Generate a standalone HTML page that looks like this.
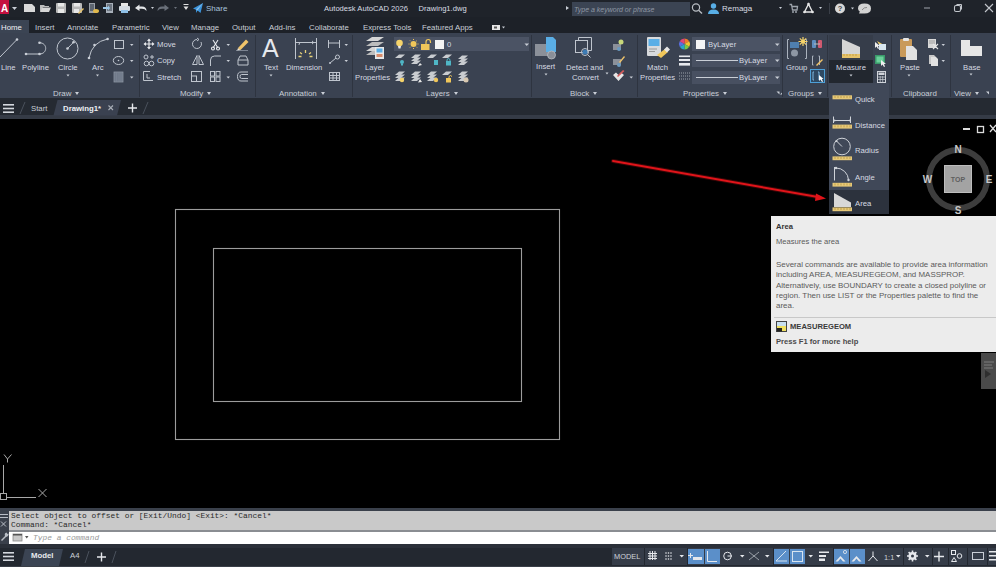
<!DOCTYPE html>
<html><head><meta charset="utf-8">
<style>
*{margin:0;padding:0;box-sizing:border-box}
html,body{width:996px;height:567px;overflow:hidden;background:#000}
body{position:relative;font-family:"Liberation Sans",sans-serif;color:#e6e9ee}
.a{position:absolute}
.t{position:absolute;white-space:nowrap;line-height:1}
#title{left:0;top:0;width:996px;height:17px;background:#1f232a}
#tabs{left:0;top:17px;width:996px;height:16px;background:#1d2128}
#ribbon{left:0;top:32.5px;width:996px;height:65.5px;background:#3a4251}
#ftabs{left:0;top:98px;width:996px;height:17px;background:#252a32}
#fline{left:0;top:115px;width:996px;height:4px;background:#353b46}
#cmd{left:0;top:508px;width:996px;height:40px;background:#3a404b}
#lay{left:0;top:548px;width:996px;height:19px;background:#232830}
.tab{font-size:7.8px;color:#c9ced6;top:23.7px}
.lbl{font-size:7.7px;color:#d7dbe2}
.plbl{font-size:7.9px;color:#c9ced6;top:89.5px}
.plbl i{display:inline-block;width:0;height:0;border-left:2.5px solid transparent;border-right:2.5px solid transparent;border-top:3px solid #c9ced6;margin-left:4px;vertical-align:1px}
.tip{font-size:7.6px;color:#5a5a5a;left:776px}
#ov{position:absolute;left:0;top:0}
</style></head><body>
<div id="title" class="a"></div>
<div id="tabs" class="a"></div>
<div id="ribbon" class="a"></div>
<div id="ftabs" class="a"></div>
<div id="fline" class="a"></div>
<div id="cmd" class="a"></div>
<div id="lay" class="a"></div>

<!-- ribbon tabs -->
<div class="a" style="left:0;top:20px;width:29px;height:13px;background:#3b4453"></div>
<!-- measure button bg -->
<div class="a" style="left:829px;top:35px;width:44px;height:25px;background:#363d4a"></div>
<div class="a" style="left:829px;top:60px;width:44px;height:23px;background:#22272f"></div>
<!-- layer dropdown & property dropdowns -->
<div class="a" style="left:394px;top:37px;width:135px;height:14px;background:#4b5364"></div>
<div class="a" style="left:692px;top:37px;width:88px;height:14px;background:#4b5364"></div>
<div class="a" style="left:692px;top:54px;width:88px;height:13px;background:#485061"></div>
<div class="a" style="left:692px;top:71px;width:88px;height:13px;background:#485061"></div>
<div class="a" style="left:394px;top:37px;width:135px;height:14px;background:#4b5364"></div>
<!-- title search -->
<div class="a" style="left:572px;top:2px;width:118px;height:14px;background:#3b4453"></div>

<!-- cmd line -->
<div class="a" style="left:9px;top:511px;width:987px;height:19px;background:#c9c9c9"></div>
<div class="a" style="left:9px;top:530px;width:987px;height:2px;background:#8a8d92"></div>
<div class="a" style="left:9px;top:532px;width:987px;height:12px;background:#ffffff"></div>
<div class="a" style="left:0;top:544px;width:996px;height:4px;background:#2b3039"></div>
<div class="a" style="left:0;top:566px;width:996px;height:1px;background:#3a3f48"></div>
<!-- status buttons bg -->
<div class="a" style="left:612px;top:548px;width:384px;height:17px;background:#353c48"></div>

<!-- dropdown menu -->
<div class="a" style="left:829px;top:83px;width:60px;height:131px;background:#404858"></div>
<div class="a" style="left:829px;top:190px;width:60px;height:24px;background:#2c323d"></div>

<!-- tooltip -->
<div class="a" style="left:771px;top:216px;width:225px;height:136px;background:#ececec"></div>
<div class="a" style="left:774px;top:317px;width:222px;height:1px;background:#c8c8c8"></div>
<!-- nav bar -->
<div class="a" style="left:981px;top:353px;width:15px;height:36px;background:#4a4a4a"></div>

<svg id="ov" width="996" height="567" viewBox="0 0 996 567">
<g fill="none" stroke="#9c9c9c" stroke-width="1.1">
<rect x="175.5" y="209.5" width="384" height="230"/>
<rect x="213.5" y="248.5" width="308" height="153"/>
</g>

<!-- ============ TITLE BAR ICONS ============ -->
<g>
<rect x="0" y="0" width="9" height="14" fill="#c5113f"/>
<path d="M12,7 H17 L14.5,10 Z" fill="#c9ced6"/>
<path d="M24,4 H32 L35,7 V12 H24 Z" fill="#d9d9d9"/>
<path d="M40,5 H44 L45,6 H49 V7 H43 L40,12 Z" fill="#bdbdbd"/><path d="M42,7.5 H51 L49,12 H40 Z" fill="#d6d6d6"/>
<rect x="56" y="3" width="10" height="10" rx="1" fill="#b9b9b9"/><rect x="58" y="3" width="6" height="3.5" fill="#e8e8e8"/><rect x="58" y="9" width="6" height="4" fill="#e8e8e8"/>
<rect x="72" y="3" width="10" height="10" rx="1" fill="#b9b9b9"/><rect x="74" y="3" width="6" height="3.5" fill="#e8e8e8"/><rect x="74" y="9" width="5" height="4" fill="#e8e8e8"/><path d="M78,13 L83,8 L84,9 L79,14 Z" fill="#e8c46a"/>
<rect x="89" y="3" width="6" height="10" fill="#9aa0a8"/><rect x="90" y="4" width="4" height="7" fill="#5d6570"/><ellipse cx="96" cy="11" rx="3" ry="2" fill="#e0b84c"/>
<rect x="106" y="3" width="7" height="10" fill="#a8b0ba"/><rect x="107" y="4" width="5" height="7" fill="#6d7580"/><path d="M103,7 H108 V5.5 L110,8 L108,10.5 V9 H103 Z" fill="#9cc8e8"/>
<rect x="121" y="3" width="7" height="3" fill="#e6e6e6"/><rect x="119" y="6" width="11" height="5" rx="1" fill="#d4dbe2"/><rect x="121" y="10" width="7" height="3" fill="#8fc0e6"/>
<path d="M135,8 L139.5,4.5 V6.5 H142 Q146.5,6.5 146.5,11 Q145,8.8 142,8.8 H139.5 V11 Z" fill="#e3e5e8"/>
<path d="M151,7 H154 L152.5,9 Z" fill="#c9ced6"/>
<path d="M169,8 L164.5,4.5 V6.5 H162 Q157.5,6.5 157.5,11 Q159,8.8 162,8.8 H164.5 V11 Z" fill="#6a707a"/>
<path d="M174,7 H177 L175.5,9 Z" fill="#6a707a"/>
<rect x="183.5" y="4" width="5" height="1" fill="#e0e0e0"/><path d="M183.5,6.5 H188.5 L186,10 Z" fill="#e0e0e0"/>
<path d="M193,8.5 L203,3 L200.5,13 L197.5,10.5 L196,13 L196,9.8 Z" fill="#3c93da"/><path d="M196,9.8 L203,3 L197.5,10.5 Z" fill="#8cc4ee"/>
<path d="M566,6 L569,8 L566,10 Z" fill="#c9ced6"/>
<circle cx="696" cy="7.5" r="3.6" fill="none" stroke="#b8bcc2" stroke-width="1.2"/><line x1="698.6" y1="10.2" x2="702" y2="13.5" stroke="#b8bcc2" stroke-width="1.4"/>
<circle cx="713.5" cy="6" r="2.7" fill="#58aee6"/><path d="M708,14 Q708,9.5 713.5,9.5 Q719,9.5 719,14 Z" fill="#58aee6"/>
<path d="M779,7 H782 L780.5,9 Z" fill="#c9ced6"/>
<path d="M789.5,4.5 H791.5 L792.5,10 H797 L797.5,6.5 H792" fill="none" stroke="#9da3ab" stroke-width="1.3"/><circle cx="793" cy="12" r="1" fill="#9da3ab"/><circle cx="796" cy="12" r="1" fill="#9da3ab"/>
<path d="M808.5,4 L804.5,12 H812.5 Z" fill="none" stroke="#e6e6e6" stroke-width="1.4"/><circle cx="808.5" cy="4" r="1.3" fill="#e6e6e6"/><circle cx="804.5" cy="12" r="1.3" fill="#e6e6e6"/><circle cx="812.5" cy="12" r="1.3" fill="#e6e6e6"/>
<path d="M819,7 H822 L820.5,9 Z" fill="#c9ced6"/>
<rect x="829" y="3" width="1" height="11" fill="#3a3f48"/>
<circle cx="840" cy="8.5" r="5" fill="#d8d8d8"/><text x="840" y="11.3" font-size="7.5" font-weight="bold" text-anchor="middle" fill="#444" font-family="Liberation Sans">?</text>
<path d="M851,7.5 H854 L852.5,9.5 Z" fill="#c9ced6"/>
<path d="M858,8.5 Q858,3.5 864.5,3.5 Q871,3.5 871,8.5 Q871,13.5 864.5,13.5 L859,13.5 L859.8,11.5 Q858,10.5 858,8.5 Z" fill="#d2d2d2"/><path d="M862,10 Q864,7 867,7.5" stroke="#888" fill="none" stroke-width="1"/>
<rect x="924" y="7.5" width="6" height="1" fill="#9fa4ab"/>
<rect x="954.5" y="5.5" width="6" height="6" rx="1.5" fill="none" stroke="#c2c6cc" stroke-width="1.1"/><path d="M956.5,4.5 H961.5 V9.5" fill="none" stroke="#c2c6cc" stroke-width="1"/>
<path d="M985,4 L993,12 M993,4 L985,12" stroke="#c2c6cc" stroke-width="1.1"/>
</g>


<!-- ============ RIBBON ICONS ============ -->
<text x="4.5" y="11.5" font-size="10" font-weight="bold" text-anchor="middle" fill="#fff" font-family="Liberation Sans">A</text>
<g fill="#c9ced6">
<!-- panel label arrows -->

<!-- button dropdown arrows -->
<path d="M66.5,74.5 H69.5 L68,76.5 Z"/><path d="M96,74.5 H99 L97.5,76.5 Z"/><path d="M269.5,74.5 H272.5 L271,76.5 Z"/>
<path d="M544.5,73.5 H547.5 L546,75.5 Z"/><path d="M605.5,72.5 H608.5 L607,74.5 Z"/><path d="M849.5,74.5 H852.5 L851,76.5 Z"/>
<path d="M907.5,74.5 H910.5 L909,76.5 Z"/><path d="M969.5,73.5 H972.5 L971,75.5 Z"/>
<path d="M130,44 H133.5 L131.75,46 Z"/><path d="M130,60 H133.5 L131.75,62 Z"/><path d="M130,76.5 H133.5 L131.75,78.5 Z"/>
<path d="M226.5,44 H230 L228.25,46 Z"/><path d="M226.5,60 H230 L228.25,62 Z"/><path d="M226.5,76.5 H230 L228.25,78.5 Z"/>
<path d="M344.5,44 H348 L346.25,46 Z"/><path d="M344.5,60 H348 L346.25,62 Z"/>
<path d="M629.5,76.5 H633 L631.25,78.5 Z"/>
<path d="M941.5,44 H945 L943.25,46 Z"/><path d="M941.5,60 H945 L943.25,62 Z"/>
<path d="M524.5,43.5 H529 L526.75,46 Z"/><path d="M775,43.5 H779.5 L777.25,46 Z"/><path d="M775,59.5 H779.5 L777.25,62 Z"/><path d="M775,76.5 H779.5 L777.25,79 Z"/>
<path d="M776.5,91.5 L779.5,91.5 L779.5,94.5 Z"/><path d="M986,91.5 L989,91.5 L989,94.5 Z"/><path d="M779,91 L782,94 M780,94.5 H782.5 V92" stroke="none"/>
</g>
<!-- separators -->
<g fill="#2e3440">
<rect x="139" y="35" width="1" height="62"/><rect x="255" y="35" width="1" height="62"/><rect x="352" y="35" width="1" height="62"/>
<rect x="531" y="35" width="1" height="62"/><rect x="637" y="35" width="1" height="62"/><rect x="782" y="35" width="1" height="62"/>
<rect x="827" y="35" width="1" height="62"/><rect x="891" y="35" width="1" height="62"/><rect x="950" y="35" width="1" height="62"/>
</g>
<g stroke="#bfc5ce" stroke-width="1" fill="none">
<!-- Draw -->
<path d="M0,57 L17,39.5"/>
<path d="M26,54 L39.5,54 C47.5,54 48,43 39.5,42.7"/>
<circle cx="67.5" cy="48.5" r="10.5"/><path d="M67.5,48.5 L73.5,42.3"/>
<path d="M89,58 Q92,42 107.6,39"/>
<rect x="114.5" y="40.5" width="9" height="8"/>
<ellipse cx="118.5" cy="60.5" rx="5.2" ry="4"/>
</g>
<g fill="#c9ced6">
<circle cx="17" cy="39.5" r="1.3"/><circle cx="26" cy="54" r="1.3"/><circle cx="39.5" cy="54" r="1.3"/><circle cx="39.5" cy="42.7" r="1.3"/>
<circle cx="67.5" cy="48.5" r="1.3"/><circle cx="73.5" cy="42.3" r="1.3"/>
<circle cx="89" cy="58" r="1.3"/><circle cx="94.5" cy="45" r="1.3"/><circle cx="107.6" cy="39" r="1.3"/>
<circle cx="118.5" cy="60.5" r="0.8"/>
</g>
<rect x="114" y="72" width="9" height="10" fill="#6c7686" stroke="#8d96a3" stroke-width="0.8"/>
<path d="M115,74 H122 M115,76 H122 M115,78 H122 M115,80 H122 M116.5,72 V82 M119,72 V82 M121,72 V82" stroke="#7d8796" stroke-width="0.6"/>
<!-- Modify -->
<g stroke="#e6e8ec" stroke-width="1.2" fill="none">
<path d="M144.5,44 H153.5 M149,39.5 V48.5"/>
</g>
<g fill="#e6e8ec">
<path d="M149,38.5 L147,41 H151 Z"/><path d="M149,49.5 L147,47 H151 Z"/><path d="M143.5,44 L146,42 V46 Z"/><path d="M154.5,44 L152,42 V46 Z"/>
</g>
<g stroke="#bfc5ce" stroke-width="1" fill="none">
<circle cx="146" cy="57" r="2"/><circle cx="146.5" cy="63.5" r="2.3"/><circle cx="151.5" cy="63.5" r="2.3"/><path d="M150,57 H154 M152,55 V59"/>
<path d="M143.5,80.5 V71.5 H150 M143.5,80.5 H153"/><path d="M147,74 V78 H150"/>
<path d="M201,42 A4.5,4.5 0 1 1 197,39.5"/><path d="M197,38 L199,39.5 L197,41"/>
<path d="M197,55.5 L192.5,64.5 H197 Z M199,55.5 L203.5,64.5 H199 Z"/>
<path d="M210.5,66 V60 Q210.5,56 214.5,56 H221"/>
<rect x="191.5" y="71.5" width="10" height="10"/><rect x="191.5" y="76" width="5" height="5.5"/>
<rect x="210.5" y="71.5" width="4" height="4.5"/><rect x="216" y="71.5" width="4" height="4.5"/><rect x="210.5" y="77" width="4" height="4.5"/><rect x="216" y="77" width="4" height="4.5"/>
<path d="M248,72 H241 Q237.5,72 237.5,76.5 Q237.5,81 241,81 H248 M248,74.5 H241.5 Q240,74.5 240,76.5 Q240,78.5 241.5,78.5 H248"/>
<path d="M238,60 L240,56 H246 L248,60 V65 H238 Z M238,60 H248"/>
</g>
<g stroke="#e6e8ec" stroke-width="1.1" fill="none"><path d="M213,40 L218,48 M218,40 L213,48"/><circle cx="213" cy="48.5" r="1.5"/><circle cx="218" cy="48.5" r="1.5"/></g>
<path d="M238,48 L246,39.5 L248.5,42 L240.5,50 Z" fill="#f0c46a"/><path d="M238,48 L240.5,50 L237,51 Z" fill="#f3e4c8"/><path d="M236,50.5 H248" stroke="#8d96a3" stroke-width="0.8"/>
<!-- Annotation -->
<g stroke="#bfc5ce" stroke-width="1" fill="none">
<path d="M295.5,38 V59 M316.5,38 V59 M296,42.5 H316"/>
<path d="M328.5,40 V48 M339.5,40 V48 M329,43 H339"/>
<path d="M330,63 L336,58"/><circle cx="337.5" cy="57" r="2"/>
<rect x="329.5" y="72.5" width="10" height="8"/><path d="M329.5,75.5 H339.5 M329.5,78 H339.5 M333,72.5 V80.5 M336.5,72.5 V80.5"/>
</g>
<path d="M298,44.5 L300,42.5 V44.5 Z M314,42.5 L312,40.5 V44.5Z" fill="#bfc5ce"/>
<g stroke="#e8d27a" stroke-width="1.3">
<path d="M305.5,50 V53 M300,52.5 L302,54 M311,52.5 L309,54 M298.5,56.5 H301.5 M309.5,56.5 H312.5"/>
</g>
<circle cx="330" cy="63" r="1" fill="#bfc5ce"/>
<!-- Layer properties -->
<path d="M366,41 L372,37 H384 L378,41 Z" fill="#d6d6d6"/><path d="M366,46 L372,42 H384 L378,46 Z" fill="#bdbdbd"/><path d="M366,51 L372,47 H384 L378,51 Z" fill="#d6d6d6"/><path d="M366,55 L372,51 H382 L376,55 Z" fill="#bdbdbd"/>
<rect x="375" y="47" width="9" height="12" fill="#e8e8e8"/><rect x="376.5" y="48.5" width="6" height="4" fill="#5aaee6"/><rect x="376.5" y="54" width="6" height="3" fill="#d98b6a"/>
<!-- layer dropdown icons -->
<circle cx="399.5" cy="43" r="3.3" fill="#f5d36a"/><path d="M398,46 H401 L400.5,48.5 H398.5 Z" fill="#e8e8e8"/>
<circle cx="413.5" cy="44" r="3" fill="#f0c65a"/><g stroke="#f0c65a" stroke-width="1"><path d="M413.5,39 V40 M413.5,48 V49 M408.5,44 H409.5 M417.5,44 H418.5 M410,40.5 L410.7,41.2 M416.3,46.8 L417,47.5 M417,40.5 L416.3,41.2 M410.7,46.8 L410,47.5"/></g>
<rect x="421" y="44" width="8.5" height="6" fill="#f0c65a"/><path d="M426,44 V42 Q426,39.5 428.3,39.5 Q430.5,39.5 430.5,42 V43" stroke="#f0c65a" stroke-width="1.2" fill="none"/>
<rect x="435" y="40" width="9" height="9" fill="#f4f4f4"/>
<!-- layer small icons -->
<g fill="#c9ccd0">
<path d="M395,58 L399,54.5 H405 L401,58 Z"/><path d="M411,58 L415,54.5 H421 L417,58 Z"/><path d="M411,61 L415,57.5 H421 L417,61 Z"/><path d="M411,64 L415,60.5 H421 L417,64 Z"/>
<path d="M427,58 L431,54.5 H437 L433,58 Z"/><path d="M442,58 L446,54.5 H452 L448,58 Z"/>
<path d="M458,59 L462,55.5 H468 L464,59 Z"/><path d="M458,62 L462,58.5 H468 L464,62 Z"/><path d="M458,65 L462,61.5 H468 L464,65 Z"/>
<path d="M395,75 L399,71.5 H405 L401,75 Z"/><path d="M395,78 L399,74.5 H405 L401,78 Z"/><path d="M395,81 L399,77.5 H405 L401,81 Z"/>
<path d="M411,75 L415,71.5 H421 L417,75 Z"/><path d="M411,78 L415,74.5 H421 L417,78 Z"/><path d="M411,81 L415,77.5 H421 L417,81 Z"/>
<path d="M427,75 L431,71.5 H437 L433,75 Z"/><path d="M427,78 L431,74.5 H437 L433,78 Z"/><path d="M427,81 L431,77.5 H437 L433,81 Z"/>
<path d="M442,75 L446,71.5 H452 L448,75 Z"/>
<path d="M458,75 L462,71.5 H468 L464,75 Z"/><path d="M458,78 L462,74.5 H468 L464,78 Z"/><path d="M458,81 L462,77.5 H468 L464,81 Z"/>
</g>
<circle cx="402" cy="62" r="2" fill="#4fb6c6"/><rect x="401" y="63.5" width="2" height="2" fill="#4fb6c6"/>
<path d="M420,63 L422,65 L418,66 Z" fill="#e8e8e8"/>
<rect x="434" y="60" width="4" height="5" fill="#4fb6c6"/>
<rect x="446" y="61" width="5" height="4.5" fill="#4fb6c6"/><path d="M447,61 V59.5 Q448.5,57.5 450,59.5 V61" stroke="#4fb6c6" fill="none"/>
<circle cx="402" cy="80" r="2.2" fill="#f5d36a"/><path d="M420,79 L422,82 L418,82.5 Z" fill="#e8e8e8"/><circle cx="436" cy="80" r="2.2" fill="#f0c65a"/>
<rect x="446" y="78" width="5" height="4.5" fill="#f0c65a"/><path d="M449,78 V76.5 Q450.5,74.5 452,76.5" stroke="#f0c65a" fill="none"/>
<circle cx="466" cy="80" r="2.5" fill="#d8c8b0"/>
<!-- Block insert -->
<rect x="535" y="44" width="14" height="12" fill="#8b9099"/><path d="M546,37 H553 L556,40 V52 H546 Z" fill="#5aaee6"/><circle cx="551.5" cy="55" r="4" fill="#8a8f98" stroke="#b7bcc3" stroke-width="0.8"/>
<g stroke="#bfc5ce" stroke-width="1" fill="none">
<rect x="575.5" y="40.5" width="12" height="12"/><path d="M578.5,40.5 V37.5 H591.5 V50.5 H587.5"/><circle cx="585" cy="52" r="3.5"/><path d="M587.5,54.5 L590.5,57.5"/>
</g>
<circle cx="585" cy="52" r="2.5" fill="#3d7bb4"/>
<g>
<rect x="613" y="44" width="8" height="6" fill="#8b9099"/><circle cx="621" cy="42" r="2.5" fill="#c8d87a"/><circle cx="619" cy="49" r="2" fill="#6a9ac0"/>
<rect x="613" y="59" width="8" height="6" fill="#8b9099"/><path d="M619,62 L624,56 L625,57 L620,63 Z" fill="#f0c46a"/><circle cx="619" cy="65" r="2" fill="#6a9ac0"/>
<path d="M613,75 L618.5,81 L624,75 L621,72.5 L618.5,75 L616,72.5 Z" fill="#e6e6e6"/><path d="M617,76 L623,70 L624.5,71 L618,77 Z" fill="#d85a5a"/>
</g>
<!-- Match properties -->
<rect x="647" y="37" width="14" height="19" rx="1" fill="#d8dadd"/><rect x="648.5" y="39" width="11" height="7" fill="#5aaee6"/><path d="M649,49 H657 M649,51.5 H655" stroke="#888" stroke-width="0.8"/>
<path d="M657,55 L665,49 L668,52 L661,58 Z" fill="#f0c65a"/><path d="M664,49.5 L667,46.5 L670,49.5 L667,52.5 Z" fill="#e6e6e6"/>
<g>
<path d="M684.5,44 L684.5,38.5 A5.5,5.5 0 0 1 689.3,41.3 Z" fill="#f07a2a"/>
<path d="M684.5,44 L689.3,41.3 A5.5,5.5 0 0 1 689.3,46.8 Z" fill="#f2c230"/>
<path d="M684.5,44 L689.3,46.8 A5.5,5.5 0 0 1 684.5,49.5 Z" fill="#7ac943"/>
<path d="M684.5,44 L684.5,49.5 A5.5,5.5 0 0 1 679.7,46.8 Z" fill="#2aa6c9"/>
<path d="M684.5,44 L679.7,46.8 A5.5,5.5 0 0 1 679.7,41.3 Z" fill="#5a6ee0"/>
<path d="M684.5,44 L679.7,41.3 A5.5,5.5 0 0 1 684.5,38.5 Z" fill="#e0457a"/>
</g>
<rect x="679" y="55.5" width="11" height="1.6" fill="#e6e8ec"/><rect x="679" y="59" width="11" height="2" fill="#e6e8ec"/><rect x="679" y="63" width="11" height="2.6" fill="#e6e8ec"/>
<path d="M679,73 H690 M679,76 H690 M679,79 H690" stroke="#9aa1ab" stroke-width="1" stroke-dasharray="1,1"/>
<rect x="696" y="40" width="9" height="9" fill="#f4f4f4"/>
<rect x="696" y="60" width="42" height="1" fill="#c9ced6"/><rect x="696" y="77" width="42" height="1" fill="#c9ced6"/>
<!-- Groups -->
<g stroke="#aab2bd" stroke-width="1" fill="none"><path d="M789,39.5 H787.5 V58.5 H789 M805,39.5 H806.5 V58.5 H805"/></g>
<rect x="790" y="42" width="9" height="6" fill="#4f7fb0"/><circle cx="794.5" cy="53" r="3.5" fill="#8d96a3"/>
<g stroke="#f5d36a" stroke-width="1.2"><path d="M803,37 V46 M798.5,41.5 H807.5 M799.8,38.3 L806.2,44.7 M806.2,38.3 L799.8,44.7"/></g><circle cx="803" cy="41.5" r="2" fill="#f5d36a"/>
<rect x="812" y="40" width="4" height="8" rx="1" fill="#5f8fc0"/><rect x="818" y="40" width="4" height="8" rx="1" fill="#d05a70"/><path d="M814,44 H820" stroke="#bbb"/>
<path d="M813.5,56 H812.5 V65 H813.5 M818.5,56 H819.5 V65" stroke="#aab2bd" fill="none"/><path d="M816,65 L822,59 L823,60 L817,66Z" fill="#f0c46a"/>
<rect x="810.5" y="69.5" width="14" height="13" fill="#2f4a63" stroke="#4da0d8" stroke-width="1"/>
<path d="M814,72 H813 V80 H814 M818,72 H819 V80" stroke="#7fb8e0" fill="none"/><path d="M819,75 V81 L820.5,79.5 L822,82 L823,81.5 L821.8,79 H823.5 Z" fill="#ffffff"/>
<!-- Measure -->
<path d="M842,39 L860,47 V55 H842 Z" fill="#d5d5d5"/><rect x="842" y="54" width="18" height="4" fill="#e6c26a"/><path d="M844,54 V56 M847,54 V56 M850,54 V56 M853,54 V56 M856,54 V56" stroke="#b08a30" stroke-width="0.6"/>
<path d="M877,41 L880,46 L881,44 L884,45" fill="#f5d36a"/><rect x="879" y="44" width="7" height="6" fill="#d8e6f0"/><path d="M875,42 V48 L876.5,46.5 L878,49 L879,48.5 L878,46 H880 Z" fill="#f0f0f0"/>
<rect x="875" y="55" width="10" height="9" fill="#3a9a6a"/><rect x="876.5" y="56.5" width="7" height="6" fill="#6ad09a"/><path d="M881,60 V66 L882.5,64.5 L884,67 L885,66.5 L884,64 H886 Z" fill="#f0f0f0"/>
<rect x="877.5" y="71.5" width="8" height="11" fill="none" stroke="#d0d4da"/><rect x="878.5" y="72.5" width="6" height="2.5" fill="#d0d4da"/><path d="M878,77 H885 M878,79.5 H885 M880.2,76 V82 M882.7,76 V82" stroke="#d0d4da" stroke-width="0.7"/>
<!-- Clipboard -->
<rect x="900" y="39" width="12" height="18" rx="1" fill="#c99a5a"/><rect x="903" y="38" width="6" height="3" rx="1" fill="#e6e6e6"/><path d="M906,46 H913 L917,50 V60 H906 Z" fill="#e2e2e2"/>
<rect x="928" y="39" width="8" height="9" fill="#d8d8d8"/><path d="M929,41 H935 M929,43 H935" stroke="#888" stroke-width="0.7"/><path d="M933,44 L938,49 M938,44 L933,49" stroke="#e6e6e6" stroke-width="1.1"/>
<path d="M929,55 H934 L936,57 V64 H929 Z" fill="#c8c8c8"/><path d="M931,57 H936 L938,59 V66 H931 Z" fill="#e2e2e2"/>
<!-- View base -->
<path d="M961,40 H970 V46 H982 V56 H961 Z" fill="#e6e6e6"/>


<!-- ============ FILE TABS ============ -->
<path d="M53.5,115.5 L57.5,100 H121 L117,115.5 Z" fill="#3a4150"/>
<g fill="#d4d8de"><rect x="3" y="104" width="11" height="1.6"/><rect x="3" y="107.7" width="11" height="1.6"/><rect x="3" y="111.4" width="11" height="1.6"/></g>
<path d="M20,114 L25,102 M143,114 L148,102" stroke="#4a515c" stroke-width="1"/>
<path d="M108.5,105.5 L113,110 M113,105.5 L108.5,110" stroke="#a9afb8" stroke-width="1.1"/>
<path d="M128,108 H137 M132.5,103.5 V112.5" stroke="#e6e8ec" stroke-width="1.4"/>
<!-- tab row small icon -->
<rect x="492" y="25" width="8" height="5" fill="#e6e6e6"/><rect x="494" y="26.5" width="3" height="2" fill="#555"/><path d="M502,26.5 H505 L503.5,28.5 Z" fill="#c9ced6"/>
<!-- ============ DROPDOWN MENU ICONS ============ -->
<g fill="#e6c878">
<rect x="832.5" y="95.3" width="19.5" height="4"/>
<rect x="832.5" y="124.6" width="19.5" height="4"/>
<rect x="832.5" y="156.4" width="19.5" height="3.8"/>
<rect x="832.5" y="182.8" width="19.5" height="3.8"/>
<rect x="832.5" y="207.4" width="19.5" height="3.8"/>
</g>
<g stroke="#a8862e" stroke-width="0.6">
<path d="M835,96 V98 M838,96 V98 M841,96 V98 M844,96 V98 M847,96 V98 M850,96 V98"/>
<path d="M835,125.3 V127.3 M838,125.3 V127.3 M841,125.3 V127.3 M844,125.3 V127.3 M847,125.3 V127.3 M850,125.3 V127.3"/>
<path d="M835,157 V159 M838,157 V159 M841,157 V159 M844,157 V159 M847,157 V159 M850,157 V159"/>
<path d="M835,183.4 V185.4 M838,183.4 V185.4 M841,183.4 V185.4 M844,183.4 V185.4 M847,183.4 V185.4 M850,183.4 V185.4"/>
<path d="M835,208 V210 M838,208 V210 M841,208 V210 M844,208 V210 M847,208 V210 M850,208 V210"/>
</g>
<g stroke="#cfd3d9" stroke-width="1" fill="none">
<path d="M833.5,116.5 V123 M850.5,116.5 V123 M834,120.5 H850"/>
<circle cx="842" cy="146.5" r="8.3"/><path d="M842,146.5 L836.5,141"/>
<path d="M834.5,167 V180.5 M836,168 A12.5,12.5 0 0 1 848.5,180"/>
</g>
<circle cx="834.5" cy="120.5" r="1" fill="#cfd3d9"/><circle cx="850" cy="120.5" r="1" fill="#cfd3d9"/>
<circle cx="836.5" cy="141" r="1.1" fill="#cfd3d9"/><circle cx="836" cy="168" r="1.2" fill="#cfd3d9"/><circle cx="848.5" cy="180" r="1.2" fill="#cfd3d9"/>
<path d="M834,193 L851,202.5 V207 H834 Z" fill="#d8d8d8"/>
<!-- tooltip icon -->
<rect x="776.5" y="321.5" width="10" height="10" fill="#f0e060" stroke="#444" stroke-width="1"/><rect x="777" y="322" width="9" height="4" fill="#c8e0f0"/><rect x="777" y="328" width="5" height="3.5" fill="#222"/>
<!-- ============ VIEWCUBE ============ -->
<circle cx="958" cy="179" r="29" fill="none" stroke="#3d3d3d" stroke-width="6"/>
<rect x="944.5" y="165.5" width="27" height="27" fill="#a3a3a3" stroke="#bdbdbd" stroke-width="1"/>
<g font-family="Liberation Sans" font-weight="bold" fill="#c8c8c8" text-anchor="middle">
<text x="958" y="152.5" font-size="10">N</text>
<text x="958" y="213.5" font-size="10">S</text>
<text x="927.5" y="183" font-size="10">W</text>
<text x="989" y="183" font-size="10">E</text>
</g>
<text x="958" y="182" font-family="Liberation Sans" font-weight="bold" font-size="7" fill="#5e5e5e" text-anchor="middle">TOP</text>
<rect x="963" y="128" width="7" height="2" fill="#dcdcdc"/>
<rect x="977.5" y="126.5" width="6" height="6" fill="none" stroke="#dcdcdc" stroke-width="1.3"/>
<path d="M990,125 L996,132 M996,125 L990,132" stroke="#dcdcdc" stroke-width="1.3"/>
<g stroke="#8a8a8a" stroke-width="0.8" fill="none"><path d="M984,362 H994 M984,365 H992 M984,368 H993"/></g><path d="M985,370 L991,374 L985,378 Z" fill="#2f2f2f"/>
<!-- ============ COMMAND LINE ============ -->
<g stroke="#b9bec6" stroke-width="1"><path d="M0,514.5 H8 M0,517.5 H8"/><path d="M1,521.5 L6,526.5 M6,521.5 L1,526.5"/></g>
<path d="M1,540 L5,536 Q4,533 6.5,532.5 L7.5,534 L8.5,533.5 Q9,536 6,537 L2,541 Z" fill="#b9bec6"/>
<rect x="13" y="534" width="9" height="7" fill="#c9c9c9" stroke="#8a8a8a" stroke-width="0.8"/><rect x="13" y="534" width="9" height="1.5" fill="#555"/>
<path d="M25,536 H28.5 L26.75,538.5 Z" fill="#555"/>
<!-- ============ LAYOUT TABS ============ -->
<path d="M21,566 L25,549 H63 L59,566 Z" fill="#3b4453"/>
<g fill="#d4d8de"><rect x="3" y="552" width="11" height="1.6"/><rect x="3" y="555.7" width="11" height="1.6"/><rect x="3" y="559.4" width="11" height="1.6"/></g>
<path d="M85,563 L89,551 M112,563 L116,551" stroke="#4a515c" stroke-width="1"/>
<path d="M97,557 H106 M101.5,552.5 V561.5" stroke="#e6e8ec" stroke-width="1.4"/>


<!-- ============ STATUS BAR ============ -->
<g fill="#22272f">
<rect x="644" y="548" width="1" height="17"/><rect x="687" y="548" width="1" height="17"/><rect x="773" y="548" width="1" height="17"/>
<rect x="833" y="548" width="1" height="17"/><rect x="903" y="548" width="1" height="17"/><rect x="932" y="548" width="1" height="17"/>
<rect x="948" y="548" width="1" height="17"/><rect x="967" y="548" width="1" height="17"/><rect x="987" y="548" width="1" height="17"/>
</g>
<g fill="#5b8fc9">
<rect x="688" y="549" width="16" height="15"/><rect x="705" y="549" width="15" height="15"/>
<rect x="774" y="549" width="15" height="15"/><rect x="790" y="549" width="15" height="15"/>
<rect x="834" y="549" width="15" height="15"/><rect x="850" y="549" width="15" height="15"/>
</g>
<g stroke="#e6e8ec" stroke-width="1" fill="none">
<path d="M650,551 V560 M652.5,551 V560 M655,551 V560 M648,553.5 H657 M648,556 H657 M648,558.5 H657"/>
<path d="M707.5,551 V561.5 H717"/>
<circle cx="727.5" cy="556" r="3.8"/><path d="M727.5,556 H732"/>
<path d="M749,552 L759,560 M759,552 L749,560" stroke="#9aa0a8"/>
<path d="M776,561 L786,551 M776,561 H787" stroke="#d8e4f0"/>
<rect x="792.5" y="551.5" width="10" height="10" stroke="#d8e4f0"/>
<path d="M873,551.5 V556 L868.5,561 M873,556 L877.5,561"/>
<path d="M934,556.5 H944 M939,551.5 V561.5" stroke-width="1.4"/>
<rect x="951.5" y="550.5" width="4" height="4"/><circle cx="959.5" cy="556" r="2.3"/><path d="M954,557.5 L956.5,561.5 H951.5 Z"/>
<rect x="972.5" y="552.5" width="11" height="7" stroke="#c9ced6"/>
</g>
<g fill="#e6e8ec">
<circle cx="666" cy="553" r="0.8"/><circle cx="668.5" cy="553" r="0.8"/><circle cx="671" cy="553" r="0.8"/>
<circle cx="666" cy="556" r="0.8"/><circle cx="668.5" cy="556" r="0.8"/><circle cx="671" cy="556" r="0.8"/>
<circle cx="666" cy="559" r="0.8"/><circle cx="668.5" cy="559" r="0.8"/><circle cx="671" cy="559" r="0.8"/>
<path d="M679.5,555 H684 L681.75,557.5 Z"/><path d="M740,555 H744.5 L742.25,557.5 Z"/><path d="M765,555 H769.5 L767.25,557.5 Z"/>
<path d="M808.5,555 H813 L810.75,557.5 Z"/><path d="M896,555 H900.5 L898.25,557.5 Z"/><path d="M925,555 H929.5 L927.25,557.5 Z"/>
<rect x="690" y="553" width="1" height="5"/><rect x="688" y="555" width="5" height="1"/><rect x="693" y="557" width="9" height="3"/>
<rect x="819" y="551.5" width="10" height="1.5"/><rect x="819" y="555" width="7" height="2"/><rect x="819" y="558.5" width="6" height="2.5"/>
<path d="M840.5,551 V556 L835.5,561.5 H838 L840.5,558.5 L843,561.5 H845.5 L840.5,556 Z"/>
<path d="M856.5,551 V556 L851.5,561.5 H854 L856.5,558.5 L859,561.5 H861.5 L856.5,556 Z"/>
<circle cx="912.5" cy="556" r="4"/>
<rect x="989" y="551" width="7" height="1.5"/><rect x="989" y="555" width="7" height="1.5"/><rect x="989" y="559" width="7" height="1.5"/>
</g>
<circle cx="845" cy="552" r="1.6" fill="none" stroke="#e6e8ec" stroke-width="0.8"/>
<g stroke="#e6e8ec" stroke-width="1.6"><path d="M912.5,550.5 V561.5 M907,556 H918 M908.6,552.1 L916.4,559.9 M916.4,552.1 L908.6,559.9"/></g>
<circle cx="912.5" cy="556" r="1.5" fill="#353c48"/>
<text x="884" y="559.5" font-family="Liberation Sans" font-size="7.4" fill="#c9ced6">1:1</text>

<!-- red arrow -->
<line x1="613" y1="161" x2="818" y2="197" stroke="#a01010" stroke-opacity="0.35" stroke-width="4" stroke-linecap="round"/>
<line x1="613" y1="161" x2="818" y2="197" stroke="#e0141a" stroke-width="2" stroke-linecap="round"/>
<path d="M826,198.5 L816,193.5 L815,201 Z" fill="#e0141a"/>
<!-- viewcube -->

<!-- UCS -->
<g stroke="#a8a8a8" stroke-width="1" fill="none">
<line x1="3.5" y1="465" x2="3.5" y2="493"/>
<rect x="0.5" y="493.5" width="6" height="6"/>
<line x1="7" y1="497.5" x2="36" y2="497.5"/>
<path d="M38.5,489 L46.5,497 M46.5,489 L38.5,497"/>
<path d="M4,454.5 L7.5,459 L11.5,454.5 M7.5,459 L7.5,462.5"/>
</g>
</svg>

<!-- texts -->
<div class="t" style="left:324px;top:4.8px;font-size:7.6px;color:#d9dde3">Autodesk AutoCAD 2026</div><div class="t" style="left:418.5px;top:4.8px;font-size:7.6px;color:#d9dde3">Drawing1.dwg</div>
<div class="t" style="left:574px;top:5.5px;font-size:7.0px;font-style:italic;color:#8f97a3">Type a keyword or phrase</div>
<div class="t" style="left:722px;top:4.8px;font-size:8px;color:#d9dde3">Remaga</div>
<div class="t" style="left:206px;top:4.8px;font-size:8px;color:#a9c3dc">Share</div>

<div class="t tab" style="left:1px;color:#eef0f4">Home</div>
<div class="t tab" style="left:35px">Insert</div>
<div class="t tab" style="left:67px">Annotate</div>
<div class="t tab" style="left:112px">Parametric</div>
<div class="t tab" style="left:162px">View</div>
<div class="t tab" style="left:191px">Manage</div>
<div class="t tab" style="left:232px">Output</div>
<div class="t tab" style="left:269px">Add-ins</div>
<div class="t tab" style="left:309px">Collaborate</div>
<div class="t tab" style="left:363px">Express Tools</div>
<div class="t tab" style="left:422px">Featured Apps</div>

<!-- ribbon labels -->
<div class="t lbl" style="left:1px;top:63.8px">Line</div>
<div class="t lbl" style="left:22px;top:63.8px">Polyline</div>
<div class="t lbl" style="left:58px;top:63.8px">Circle</div>
<div class="t lbl" style="left:92px;top:63.8px">Arc</div>
<div class="t plbl" style="left:53px">Draw<i></i></div>
<div class="t lbl" style="left:157px;top:41px">Move</div>
<div class="t lbl" style="left:157px;top:57px">Copy</div>
<div class="t lbl" style="left:157px;top:73.8px">Stretch</div>
<div class="t plbl" style="left:180px">Modify<i></i></div>
<div class="t" style="left:262px;top:36px;font-size:25px;color:#e6e8ec">A</div>
<div class="t lbl" style="left:264px;top:63.8px">Text</div>
<div class="t lbl" style="left:286px;top:63.8px">Dimension</div>
<div class="t plbl" style="left:279px">Annotation<i></i></div>
<div class="t lbl" style="left:365px;top:63.8px">Layer</div>
<div class="t lbl" style="left:355px;top:73.8px">Properties</div>
<div class="t lbl" style="left:447px;top:41px">0</div>
<div class="t plbl" style="left:426px">Layers<i></i></div>
<div class="t lbl" style="left:536px;top:62.8px">Insert</div>
<div class="t lbl" style="left:566px;top:63.8px">Detect and</div>
<div class="t lbl" style="left:572px;top:73.8px">Convert</div>
<div class="t plbl" style="left:570px">Block<i></i></div>
<div class="t lbl" style="left:647px;top:63.8px">Match</div>
<div class="t lbl" style="left:640px;top:73.8px">Properties</div>
<div class="t lbl" style="left:708px;top:41px">ByLayer</div>
<div class="t lbl" style="left:739px;top:57px">ByLayer</div>
<div class="t lbl" style="left:739px;top:74px">ByLayer</div>
<div class="t plbl" style="left:683px">Properties<i></i></div>
<div class="t lbl" style="left:786px;top:63.8px">Group</div>
<div class="t plbl" style="left:788px">Groups<i></i></div>
<div class="t lbl" style="left:836px;top:63.8px">Measure</div>
<div class="t lbl" style="left:900px;top:63.8px">Paste</div>
<div class="t plbl" style="left:903px">Clipboard</div>
<div class="t lbl" style="left:963px;top:63.8px">Base</div>
<div class="t plbl" style="left:954px">View<i></i></div>

<!-- tabs file -->
<div class="t" style="left:31px;top:105px;font-size:7.8px;color:#c9ced6">Start</div>
<div class="t" style="left:63px;top:105px;font-size:7.8px;font-weight:bold;color:#eef0f4">Drawing1*</div>

<!-- dropdown items -->
<div class="t lbl" style="left:855px;top:95.5px">Quick</div>
<div class="t lbl" style="left:855px;top:121.5px">Distance</div>
<div class="t lbl" style="left:855px;top:147px">Radius</div>
<div class="t lbl" style="left:855px;top:173.5px">Angle</div>
<div class="t lbl" style="left:855px;top:199.5px">Area</div>

<!-- tooltip text -->
<div class="t tip" style="top:223px;font-weight:bold;color:#333">Area</div>
<div class="t tip" style="top:238px">Measures the area</div>
<div class="t tip" style="top:260px;line-height:10.3px;font-size:7.95px">Several commands are available to provide area information<br>including AREA, MEASUREGEOM, and MASSPROP.<br>Alternatively, use BOUNDARY to create a closed polyline or<br>region. Then use LIST or the Properties palette to find the<br>area.</div>
<div class="t tip" style="left:790px;top:323px;font-weight:bold;color:#3a3a3a">MEASUREGEOM</div>
<div class="t tip" style="top:338px;font-weight:bold;color:#4a4a4a">Press F1 for more help</div>

<!-- cmd text -->
<div class="t" style="left:11px;top:511.6px;font-family:'Liberation Mono',monospace;font-size:7.9px;color:#2a2a2a">Select object to offset or [Exit/Undo] &lt;Exit&gt;: *Cancel*</div>
<div class="t" style="left:11px;top:521.4px;font-family:'Liberation Mono',monospace;font-size:7.9px;color:#2a2a2a">Command: *Cancel*</div>
<div class="t" style="left:33px;top:534.4px;font-family:'Liberation Mono',monospace;font-size:7.9px;font-style:italic;color:#9a9a9a">Type a command</div>

<div class="t" style="left:31px;top:552px;font-size:7.8px;font-weight:bold;color:#e8eaee">Model</div>
<div class="t" style="left:70px;top:552px;font-size:7.8px;color:#c9ced6">A4</div>
<div class="t" style="left:614px;top:553px;font-size:7.4px;color:#d0d4da">MODEL</div>
</body></html>
